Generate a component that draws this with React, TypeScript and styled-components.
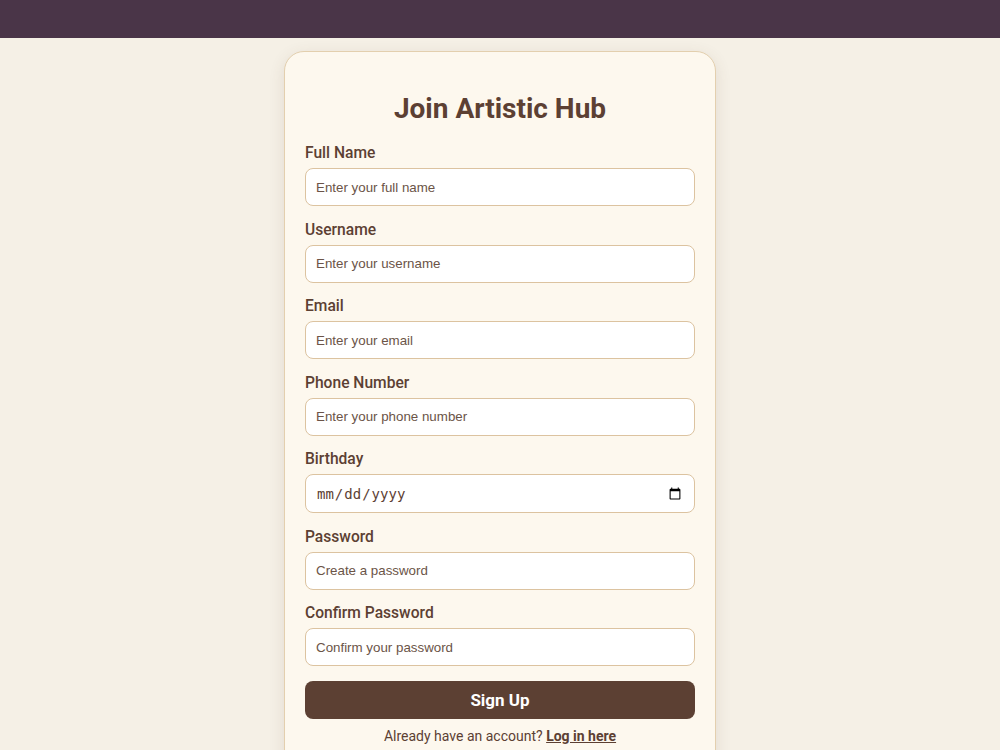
import styled, { createGlobalStyle } from "styled-components";

const GlobalStyle = createGlobalStyle`
	* {
		box-sizing: border-box;
	}
	body {
		margin: 0;
		background-color: #f5f0e6;
		font-family: Roboto, "Liberation Sans", sans-serif;
		color: #5c4033;
	}
`

const TopBar = styled.header`
	height: 38px;
	background-color: #4a3548;
`

const Page = styled.main`
	display: flex;
	justify-content: center;
	padding-top: 13px;
`

const Card = styled.div`
	width: 432px;
	padding: 30px 20px 30px 20px;
	background-color: #fdf8ee;
	border: 1px solid #e3cfae;
	border-radius: 20px;
	box-shadow: 0 4px 16px rgba(92, 64, 51, 0.12);
`

const Title = styled.h2`
	font-size: 28px;
	font-weight: 700;
	text-align: center;
	margin: 10px 0 19px 0;
	line-height: 33px;
`

const Field = styled.div`
	display: flex;
	flex-direction: column;
	margin-bottom: 14.5px;
`

const Label = styled.label`
	font-size: 15.6px;
	font-weight: 500;
	line-height: 19px;
	margin-bottom: 5px;
`

const Input = styled.input<{ $mono?: boolean }>`
	height: ${p => p.$mono ? "39px" : "38px"};
	padding: 0 10px;
	border: 1px solid #dcc3a0;
	border-radius: 8px;
	background-color: #fff;
	font-size: ${p => p.$mono ? "14px" : "13.33px"};
	font-family: ${p => p.$mono ? '"DejaVu Sans Mono", monospace' : '"Liberation Sans", Arial, sans-serif'};
	color: #5c4033;
	outline: none;

	&::placeholder {
		color: #6b5447;
	}
`

const SubmitButton = styled.button`
	width: 100%;
	height: 38px;
	margin-top: 0;
	border: none;
	border-radius: 8px;
	background-color: #5c4033;
	color: #fff;
	font-family: Roboto, sans-serif;
	font-size: 17px;
	font-weight: 700;
`

const Footer = styled.p`
	text-align: center;
	font-size: 14px;
	margin: 9px 0 0 0;
	color: #5c4033;
`

const LoginLink = styled.a`
	color: #5c4033;
	font-weight: 700;
	text-decoration: underline;
`

const fields = [
	{ label: "Full Name", type: "text", placeholder: "Enter your full name" },
	{ label: "Username", type: "text", placeholder: "Enter your username" },
	{ label: "Email", type: "email", placeholder: "Enter your email" },
	{ label: "Phone Number", type: "tel", placeholder: "Enter your phone number" },
	{ label: "Birthday", type: "date", placeholder: "" },
	{ label: "Password", type: "password", placeholder: "Create a password" },
	{ label: "Confirm Password", type: "password", placeholder: "Confirm your password" },
]

const App = () => {
	return (
		<>
			<GlobalStyle />
			<TopBar />
			<Page>
				<Card>
					<Title>Join Artistic Hub</Title>
					<form onSubmit={e => e.preventDefault()}>
						{fields.map(f => (
							<Field key={f.label}>
								<Label>{f.label}</Label>
								<Input type={f.type} placeholder={f.placeholder} $mono={f.type === "date"} />
							</Field>
						))}
						<SubmitButton type="submit">Sign Up</SubmitButton>
					</form>
					<Footer>
						Already have an account? <LoginLink href="#">Log in here</LoginLink>
					</Footer>
				</Card>
			</Page>
		</>
	)
}

export default App;
